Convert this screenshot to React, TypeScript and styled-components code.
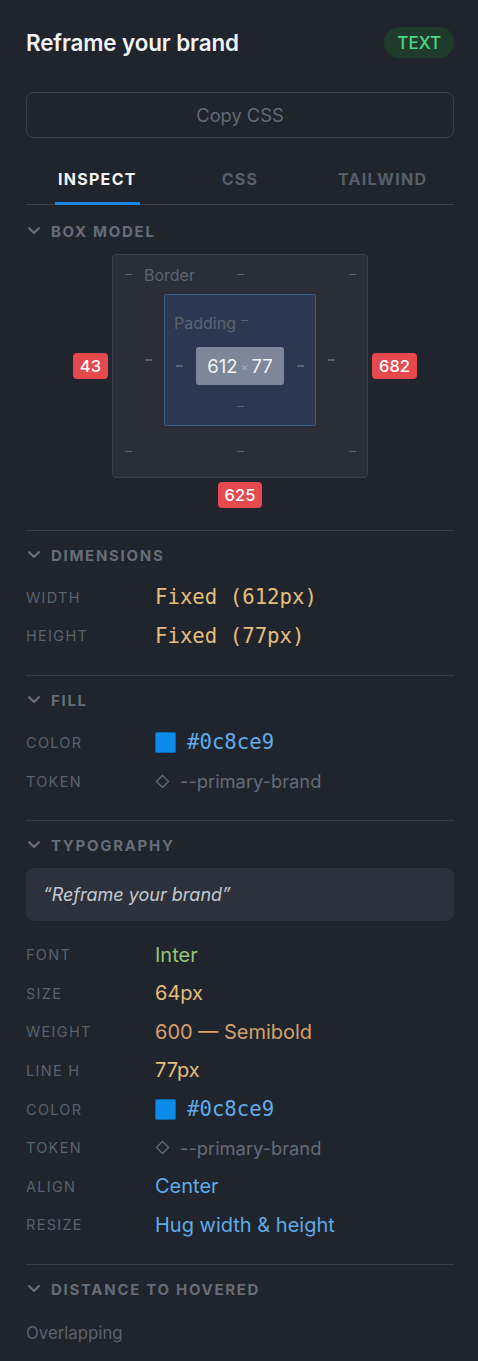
import React from "react";
import styled, { createGlobalStyle } from "styled-components";

const GlobalStyle = createGlobalStyle`
  html, body { margin: 0; padding: 0; background: #20242c; }
  body { font-family: Inter, "Liberation Sans", sans-serif; -webkit-font-smoothing: antialiased; }
  * { box-sizing: border-box; }
`;

const Panel = styled.div`
  width: 478px;
  min-height: 1361px;
  background: #20242c;
  padding: 27px 24px 18px 26px;
  display: flex;
  flex-direction: column;
`;

const Header = styled.div`
  display: flex;
  align-items: center;
  justify-content: space-between;
  height: 31px;
`;

const Title = styled.h1`
  margin: 0;
  font-size: 22.4px;
  font-weight: 600;
  color: #f1f3f6;
  letter-spacing: -0.1px;
`;

const TypeBadge = styled.span`
  display: inline-flex;
  align-items: center;
  justify-content: center;
  height: 31px;
  padding: 0 13px;
  border-radius: 16px;
  background: #1e3b2b;
  color: #4fd685;
  font-size: 17px;
  font-weight: 500;
`;

const CopyButton = styled.button`
  margin-top: 34px;
  height: 46px;
  width: 100%;
  background: transparent;
  border: 1px solid #3a3f49;
  border-radius: 8px;
  color: #636a76;
  font-family: inherit;
  font-size: 18.3px;
  cursor: pointer;
`;

const Tabs = styled.div`
  margin-top: 22px;
  display: grid;
  grid-template-columns: repeat(3, 1fr);
  border-bottom: 1px solid #3a3f49;
`;

const Tab = styled.div`
  display: flex;
  justify-content: center;
`;

const TabLabel = styled.span<{ $active?: boolean }>`
  padding: 10px 3px 14px;
  margin-bottom: -1px;
  font-size: 16px;
  line-height: 18px;
  font-weight: 700;
  letter-spacing: 1.3px;
  color: ${(p) => (p.$active ? "#f3f4f6" : "#585f6b")};
  border-bottom: 3px solid ${(p) => (p.$active ? "#1b87e0" : "transparent")};
`;

const Section = styled.section<{ $divider?: boolean; $bottom?: number }>`
  padding-top: ${(p) => (p.$divider ? 14 : 16)}px;
  padding-bottom: ${(p) => p.$bottom ?? 20}px;
  border-top: ${(p) => (p.$divider ? "1px solid #373c46" : "none")};
  display: flex;
  flex-direction: column;
`;

const SectionHeader = styled.div`
  display: flex;
  align-items: center;
  gap: 11px;
  height: 20px;
  padding-left: 2px;
  font-size: 15px;
  font-weight: 700;
  letter-spacing: 1.7px;
  color: #666d79;
`;

const Chevron = () => (
  <svg width="12" height="8" viewBox="0 0 12 8" fill="none">
    <path d="M1.2 1.2 L6 6 L10.8 1.2" stroke="#666d79" strokeWidth="2.3" strokeLinecap="round" strokeLinejoin="round" />
  </svg>
);

const Rows = styled.div`
  margin-top: 13px;
  display: flex;
  flex-direction: column;
`;

const Row = styled.div`
  display: grid;
  grid-template-columns: 129px 1fr;
  align-items: center;
  height: 38.6px;
`;

const Label = styled.span`
  font-size: 14.5px;
  letter-spacing: 1.3px;
  color: #5b626e;
`;

const Value = styled.span<{ $color: string; $mono?: boolean }>`
  display: flex;
  align-items: center;
  gap: 11px;
  color: ${(p) => p.$color};
  font-family: ${(p) => (p.$mono ? '"DejaVu Sans Mono", "Liberation Mono", monospace' : 'Inter, "Liberation Sans", sans-serif')};
  font-size: ${(p) => (p.$mono ? "20.7px" : "20px")};
`;

const Swatch = styled.span`
  width: 21px;
  height: 21px;
  border-radius: 2px;
  background: #0c8ce9;
  box-shadow: inset 0 0 0 1px rgba(0, 0, 0, 0.25);
`;

const TokenText = styled.span`
  display: flex;
  align-items: center;
  gap: 10px;
  color: #646b77;
  font-size: 18.3px;
`;

const Diamond = () => (
  <svg width="15" height="15" viewBox="0 0 15 15" fill="none">
    <path d="M7.5 1.5 L13.5 7.5 L7.5 13.5 L1.5 7.5 Z" stroke="#646b77" strokeWidth="1.3" />
  </svg>
);

/* Box model */
const BoxModelGrid = styled.div`
  margin-top: 13px;
  display: grid;
  grid-template-columns: 1fr auto 1fr;
  align-items: center;
  column-gap: 4px;
  row-gap: 4px;
`;

const Measure = styled.span<{ $align?: "start" | "end" | "center" }>`
  justify-self: ${(p) => p.$align ?? "center"};
  height: 26px;
  padding: 0 7px;
  border-radius: 4px;
  background: #e5484d;
  color: #ffffff;
  font-size: 16.5px;
  font-weight: 500;
  display: inline-flex;
  align-items: center;
`;

const BottomMeasure = styled.div`
  grid-column: 2;
  display: flex;
  justify-content: center;
`;

const OuterBox = styled.div`
  width: 256px;
  height: 224px;
  background: #2a2e37;
  border: 1px solid #3b404a;
  border-radius: 4px;
  display: grid;
  grid-template-columns: 51px 152px 51px;
  grid-template-rows: 39px 132px 51px;
`;

const EdgeRow = styled.div`
  grid-column: 1 / -1;
  display: grid;
  grid-template-columns: 1fr auto 1fr;
  align-items: center;
  padding: 0 11px 0 12px;
`;

const BoxLabel = styled.span`
  font-size: 16px;
  color: #5d6471;
`;

const Dash = styled.span`
  display: inline-block;
  width: 7px;
  height: 1.5px;
  background: #5a6170;
`;

const EdgeLeft = styled.div`
  display: flex;
  align-items: center;
  gap: 12px;
`;

const EdgeRight = styled.div`
  display: flex;
  justify-content: flex-end;
`;

const SideCell = styled.div<{ $side: "left" | "right" }>`
  display: flex;
  align-items: center;
  justify-content: ${(p) => (p.$side === "left" ? "flex-end" : "flex-start")};
  padding: ${(p) => (p.$side === "left" ? "0 12px 0 0" : "0 0 0 12px")};
`;

const PaddingBox = styled.div`
  background: #2b3850;
  border: 1px solid #3a5c8f;
  border-radius: 2px;
  display: flex;
  flex-direction: column;
  padding: 18px 0 12px;
`;

const PaddingTop = styled.div`
  display: grid;
  grid-template-columns: 1fr auto 1fr;
  align-items: center;
  height: 18px;
  padding-left: 9px;
`;

const PaddingDash = styled(Dash)`
  margin-top: -5px;
`;

const ContentRow = styled.div`
  margin-top: 16px;
  display: flex;
  align-items: center;
  justify-content: center;
  gap: 13px;
`;

const ContentBox = styled.div`
  width: 88px;
  height: 38px;
  border-radius: 3px;
  background: #7e8799;
  color: #f2f4f7;
  font-size: 18.5px;
  display: flex;
  align-items: center;
  justify-content: center;
  gap: 3px;
`;

const Times = styled.span`
  font-size: 12px;
  color: #a3aab6;
`;

const BottomDashRow = styled.div`
  margin-top: 15px;
  height: 14px;
  display: flex;
  align-items: center;
  justify-content: center;
`;

const QuoteBox = styled.div`
  margin-top: 13px;
  height: 53px;
  border-radius: 8px;
  background: #2c313b;
  display: flex;
  align-items: center;
  padding: 0 17px;
  font-size: 18px;
  font-style: italic;
  color: #c4c8cf;
`;

const TypoRows = styled(Rows)`
  margin-top: 14px;
`;

const Note = styled.div`
  margin-top: 24px;
  font-size: 16.8px;
  color: #5b626e;
`;

type RowSpec = { label: string; node: React.ReactNode };

const SectionBlock: React.FC<{ title: string; divider?: boolean; bottom?: number; children: React.ReactNode }> = ({
  title,
  divider,
  bottom,
  children,
}) => (
  <Section $divider={divider} $bottom={bottom}>
    <SectionHeader>
      <Chevron />
      {title}
    </SectionHeader>
    {children}
  </Section>
);

const PropRows: React.FC<{ rows: RowSpec[] }> = ({ rows }) => (
  <>
    {rows.map((r) => (
      <Row key={r.label}>
        <Label>{r.label}</Label>
        {r.node}
      </Row>
    ))}
  </>
);

const colorNode = (
  <Value $color="#5fabea" $mono>
    <Swatch />
    #0c8ce9
  </Value>
);

const tokenNode = (
  <TokenText>
    <Diamond />
    --primary-brand
  </TokenText>
);

export default function App() {
  return (
    <>
      <GlobalStyle />
      <Panel>
        <Header>
          <Title>Reframe your brand</Title>
          <TypeBadge>TEXT</TypeBadge>
        </Header>
        <CopyButton>Copy CSS</CopyButton>
        <Tabs>
          <Tab>
            <TabLabel $active>INSPECT</TabLabel>
          </Tab>
          <Tab>
            <TabLabel>CSS</TabLabel>
          </Tab>
          <Tab>
            <TabLabel>TAILWIND</TabLabel>
          </Tab>
        </Tabs>

        <SectionBlock title="BOX MODEL" bottom={22}>
          <BoxModelGrid>
            <Measure $align="end">43</Measure>
            <OuterBox>
              <EdgeRow>
                <EdgeLeft>
                  <Dash />
                  <BoxLabel>Border</BoxLabel>
                </EdgeLeft>
                <Dash />
                <EdgeRight>
                  <Dash />
                </EdgeRight>
              </EdgeRow>
              <SideCell $side="left">
                <Dash />
              </SideCell>
              <PaddingBox>
                <PaddingTop>
                  <BoxLabel>Padding</BoxLabel>
                  <PaddingDash />
                  <span />
                </PaddingTop>
                <ContentRow>
                  <Dash />
                  <ContentBox>
                    612<Times>×</Times>77
                  </ContentBox>
                  <Dash />
                </ContentRow>
                <BottomDashRow>
                  <Dash />
                </BottomDashRow>
              </PaddingBox>
              <SideCell $side="right">
                <Dash />
              </SideCell>
              <EdgeRow>
                <EdgeLeft>
                  <Dash />
                </EdgeLeft>
                <Dash />
                <EdgeRight>
                  <Dash />
                </EdgeRight>
              </EdgeRow>
            </OuterBox>
            <Measure $align="start">682</Measure>
            <BottomMeasure>
              <Measure>625</Measure>
            </BottomMeasure>
          </BoxModelGrid>
        </SectionBlock>

        <SectionBlock title="DIMENSIONS" divider>
          <Rows>
            <PropRows
              rows={[
                { label: "WIDTH", node: <Value $color="#e3bf7c" $mono>Fixed (612px)</Value> },
                { label: "HEIGHT", node: <Value $color="#e3bf7c" $mono>Fixed (77px)</Value> },
              ]}
            />
          </Rows>
        </SectionBlock>

        <SectionBlock title="FILL" divider>
          <Rows>
            <PropRows
              rows={[
                { label: "COLOR", node: colorNode },
                { label: "TOKEN", node: tokenNode },
              ]}
            />
          </Rows>
        </SectionBlock>

        <SectionBlock title="TYPOGRAPHY" divider>
          <QuoteBox>“Reframe your brand”</QuoteBox>
          <TypoRows>
            <PropRows
              rows={[
                { label: "FONT", node: <Value $color="#97c47d">Inter</Value> },
                { label: "SIZE", node: <Value $color="#e3bf7c">64px</Value> },
                { label: "WEIGHT", node: <Value $color="#d6a06c">600 — Semibold</Value> },
                { label: "LINE H", node: <Value $color="#e3bf7c">77px</Value> },
                { label: "COLOR", node: colorNode },
                { label: "TOKEN", node: tokenNode },
                { label: "ALIGN", node: <Value $color="#5fabea">Center</Value> },
                { label: "RESIZE", node: <Value $color="#5fabea">Hug width &amp; height</Value> },
              ]}
            />
          </TypoRows>
        </SectionBlock>

        <SectionBlock title="DISTANCE TO HOVERED" divider>
          <Note>Overlapping</Note>
        </SectionBlock>
      </Panel>
    </>
  );
}
